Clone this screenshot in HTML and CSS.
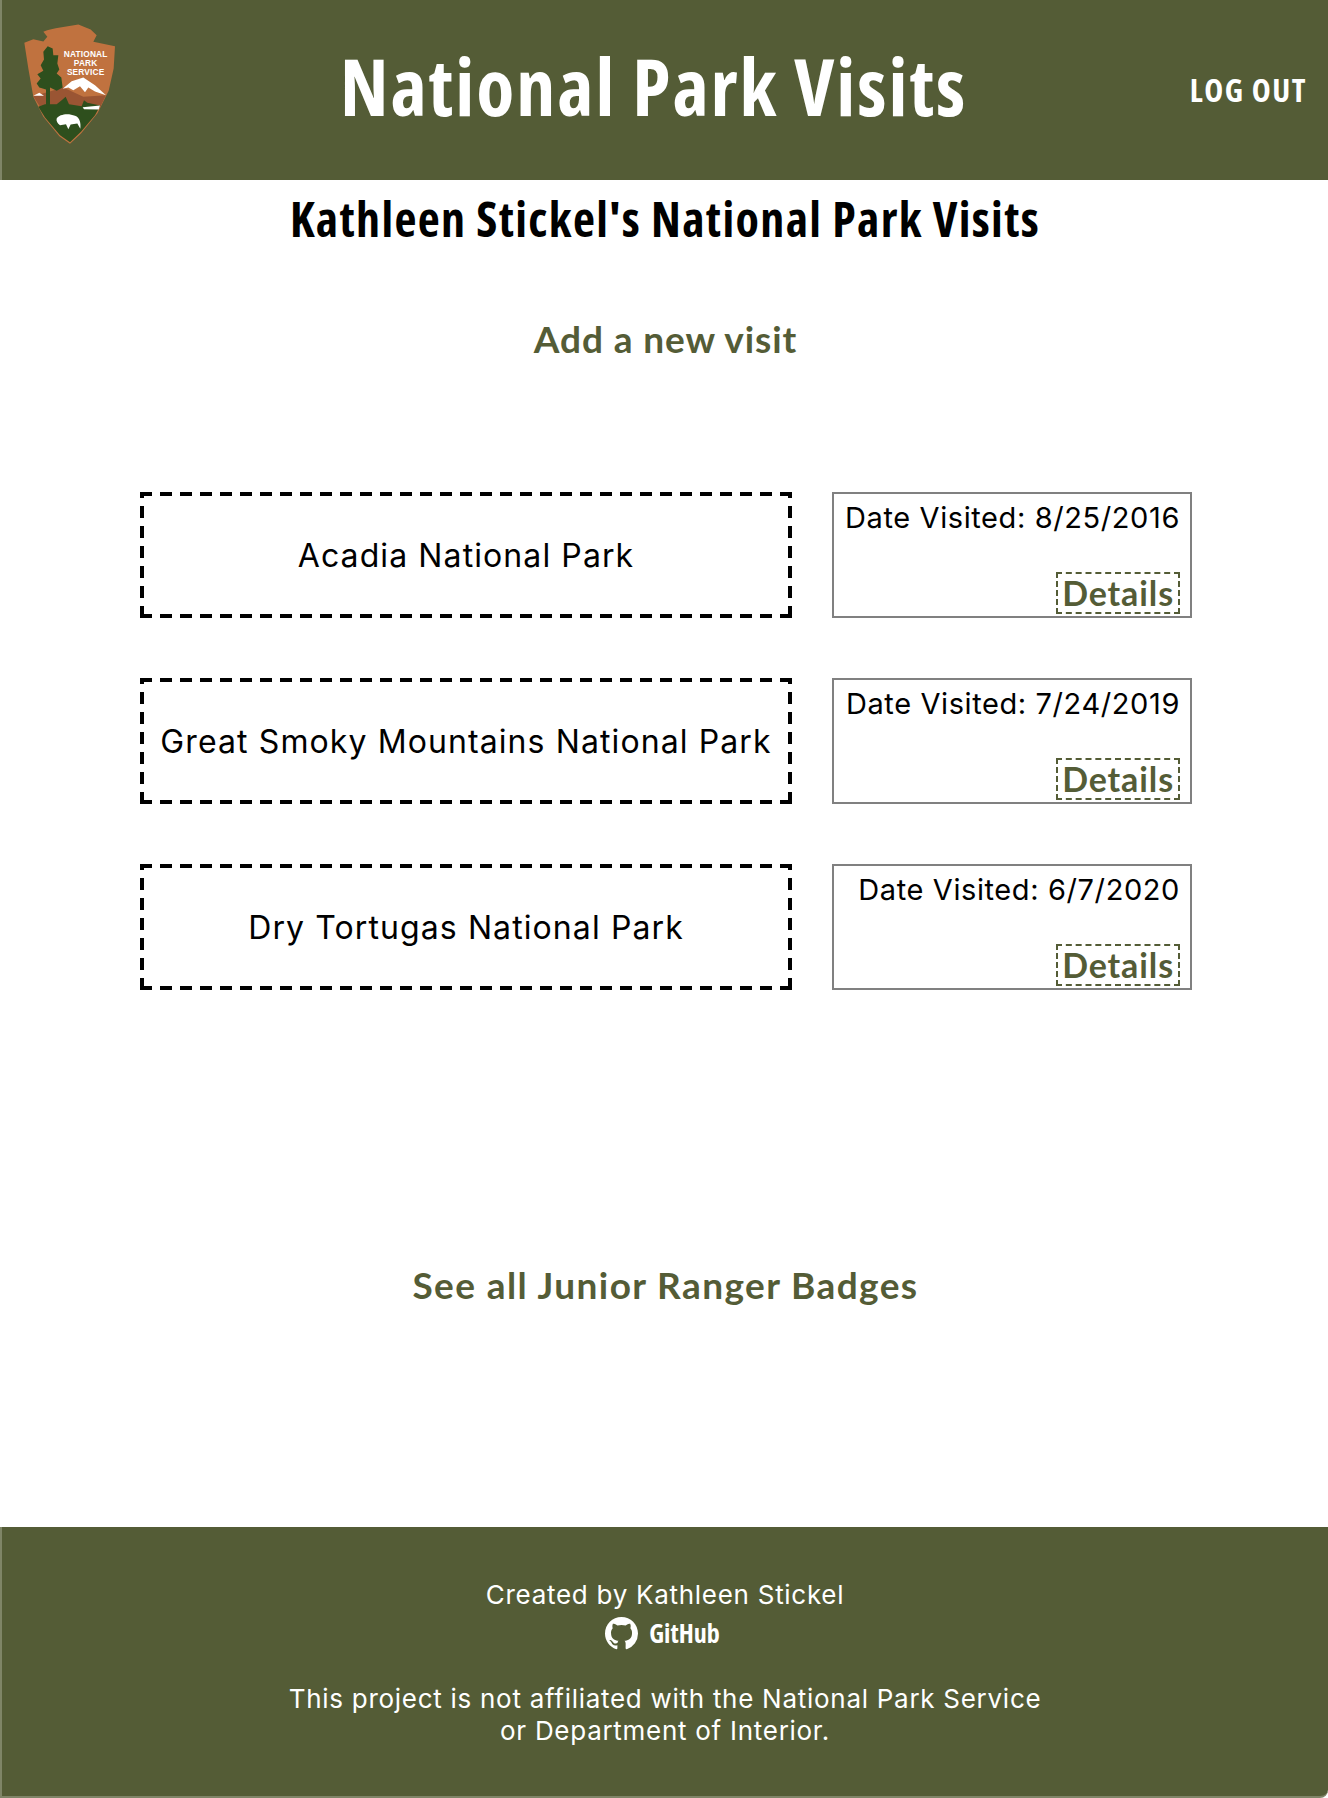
FILE: index.html
```html
<!DOCTYPE html>
<html lang="en">
<head>
<meta charset="utf-8">
<title>National Park Visits</title>
<link rel="stylesheet" href="styles.css">
</head>
<body>
<div class="page">
<header class="site-header">
  <svg class="logo" viewBox="60 60 300 380" role="img" aria-label="National Park Service">
    <path class="arrow-edge" d="M130 95C160 82 200 80 235 73L272 88L290 105L280 125L345 138L341 205L326 272L292 340L243 400L210 431L178 408L130 350L100 290L85 205L73 128L100 117L130 124L142 110Z"/>
    <path class="band" d="M100 288L190 262L250 290L318 285L300 322L240 325L120 320Z"/>
    <path class="land" d="M115 320L135 312L170 312L185 300L197 290L207 312L245 318L252 300L262 308L301 316L285 345L243 395L210 426L180 405L135 352Z"/>
    <path class="snow" d="M188 266L215 243L250 232L285 255L318 285L285 274L265 262L255 276L240 258L220 270L205 262Z"/>
    <path class="tree" d="M143 138L158 145L160 165L175 165L172 190L178 208L170 220L184 232L188 262L170 272L150 262L150 316H138V268L118 262L110 250L122 235L112 222L130 212L122 195L132 178L130 155Z"/>
    <path class="snow" d="M100 287L118 278L132 287ZM248 321L300 316L296 328L252 327Z"/>
    <path class="snow" d="M170 355C178 342 205 338 225 347C240 352 243 370 241 386L232 370L212 373L205 387L198 372L180 375C172 370 168 362 170 355Z"/>
    <text class="logo-text" x="257" y="170">NATIONAL</text>
    <text class="logo-text" x="257" y="197">PARK</text>
    <text class="logo-text" x="257" y="224">SERVICE</text>
  </svg>
  <h1 class="site-title">National Park Visits</h1>
  <a class="logout" href="#">LOG OUT</a>
</header>

<main class="content">
  <h2 class="user-title">Kathleen Stickel's National Park Visits</h2>
  <a class="action add-visit" href="#">Add a new visit</a>

  <section class="visits">
    <article class="visit">
      <a class="park" href="#">Acadia National Park</a>
      <div class="visit-info">
        <p class="visit-date">Date Visited: 8/25/2016</p>
        <a class="details" href="#">Details</a>
      </div>
    </article>
    <article class="visit">
      <a class="park" href="#">Great Smoky Mountains National Park</a>
      <div class="visit-info">
        <p class="visit-date">Date Visited: 7/24/2019</p>
        <a class="details" href="#">Details</a>
      </div>
    </article>
    <article class="visit">
      <a class="park" href="#">Dry Tortugas National Park</a>
      <div class="visit-info">
        <p class="visit-date">Date Visited: 6/7/2020</p>
        <a class="details" href="#">Details</a>
      </div>
    </article>
  </section>

  <a class="action badges" href="#">See all Junior Ranger Badges</a>
</main>

<footer class="site-footer">
  <p class="credit">Created by Kathleen Stickel</p>
  <a class="github" href="#">
    <svg class="github-mark" viewBox="0 0 16 16" aria-hidden="true"><path d="M8 0C3.58 0 0 3.58 0 8c0 3.54 2.29 6.53 5.47 7.59.4.07.55-.17.55-.38 0-.19-.01-.82-.01-1.49-2.01.37-2.53-.49-2.69-.94-.09-.23-.48-.94-.82-1.13-.28-.15-.68-.52-.01-.53.63-.01 1.08.58 1.23.82.72 1.21 1.87.87 2.33.66.07-.52.28-.87.51-1.07-1.78-.2-3.64-.89-3.64-3.95 0-.87.31-1.59.82-2.15-.08-.2-.36-1.02.08-2.12 0 0 .67-.21 2.2.82.64-.18 1.32-.27 2-.27s1.36.09 2 .27c1.53-1.04 2.2-.82 2.2-.82.44 1.1.16 1.92.08 2.12.51.56.82 1.27.82 2.15 0 3.07-1.87 3.75-3.65 3.95.29.25.54.73.54 1.48 0 1.07-.01 1.93-.01 2.2 0 .21.15.46.55.38A8.01 8.01 0 0 0 16 8c0-4.42-3.58-8-8-8z"/></svg>
    <span>GitHub</span>
  </a>
  <p class="disclaimer">This project is not affiliated with the National Park Service<br>or Department of Interior.</p>
</footer>
</div>
</body>
</html>
```
FILE: styles.css
```css
* { box-sizing: border-box; }
html, body { margin: 0; padding: 0; background: #fff; }
a { text-decoration: none; color: inherit; }
p, h1, h2 { margin: 0; }

.page {
  width: 1328px;
  height: 1798px;
  display: flex;
  flex-direction: column;
  font-family: "Inter", "Liberation Sans", sans-serif;
  color: #000;
}

.site-header {
  flex: 0 0 180px;
  display: flex;
  align-items: flex-start;
  background: #545c36;
  border-left: 2px solid #7f8567;
  color: #fff;
}
.logo { width: 100px; height: 127px; margin: 20px 0 0 18px; flex: none; }
.arrow-edge { fill: #c0723f; }
.band { fill: #9a5533; }
.land { fill: #2e4f1d; }
.tree { fill: #2e4f1d; }
.snow { fill: #fff; }
.logo-text {
  fill: #fff;
  font-family: "Liberation Sans", sans-serif;
  font-weight: 700;
  font-size: 25px;
  letter-spacing: 0.5px;
  text-anchor: middle;
}
.site-title {
  margin: 38px 0 0 220px;
  font-family: "Open Sans", "Liberation Sans", sans-serif;
  font-stretch: 75%;
  font-weight: 700;
  font-size: 78px;
  line-height: 96px;
  letter-spacing: 1.95px;
  white-space: nowrap;
}
.logout {
  margin: 70px 0 0 auto;
  padding-right: 21px;
  font-family: "Open Sans", "Liberation Sans", sans-serif;
  font-stretch: 75%;
  font-weight: 700;
  font-size: 32px;
  line-height: 40px;
  letter-spacing: 1.5px;
}

.content {
  flex: 1;
  display: flex;
  flex-direction: column;
  align-items: center;
}
.user-title {
  margin: 9px 0 0 2px;
  font-family: "Open Sans", "Liberation Sans", sans-serif;
  font-stretch: 75%;
  font-weight: 700;
  font-size: 48px;
  line-height: 60px;
  letter-spacing: 1.35px;
  white-space: nowrap;
}
.action {
  font-family: "Lato", sans-serif;
  font-weight: 700;
  font-size: 37px;
  line-height: 48px;
  color: #545c36;
}
.add-visit { margin: 66px 0 0 3px; letter-spacing: 0.9px; }
.badges { margin: 271px 0 0 3px; letter-spacing: 1.4px; }

.visits {
  margin-top: 129px;
  width: 1052px;
  margin-left: 4px;
  display: flex;
  flex-direction: column;
  gap: 60px;
}
.visit {
  display: flex;
  gap: 40px;
  height: 126px;
}
.park {
  flex: 1;
  display: flex;
  align-items: center;
  justify-content: center;
  background-image:
    repeating-linear-gradient(90deg, #000 0 12px, transparent 12px 20px),
    repeating-linear-gradient(90deg, #000 0 12px, transparent 12px 20px),
    repeating-linear-gradient(0deg, #000 0 12px, transparent 12px 20px),
    repeating-linear-gradient(0deg, #000 0 12px, transparent 12px 20px);
  background-size: 100% 4px, 100% 4px, 4px 100%, 4px 100%;
  background-position: 0 0, 0 100%, 0 0, 100% 0;
  background-repeat: no-repeat;
  font-size: 32px;
  letter-spacing: 1.1px;
  white-space: nowrap;
}
.visit-info {
  flex: 0 0 360px;
  border: 2px solid #808080;
  padding: 4px 10px 2px;
  display: flex;
  flex-direction: column;
  align-items: flex-end;
  justify-content: space-between;
}
.visit-date { font-size: 29px; line-height: 40px; letter-spacing: 0.6px; white-space: nowrap; }
.details {
  font-family: "Lato", sans-serif;
  font-weight: 700;
  font-size: 34px;
  line-height: 38px;
  padding: 0 4px;
  border: 2px dashed #545c36;
  color: #545c36;
  letter-spacing: 0.9px;
}

.site-footer {
  flex: 0 0 271px;
  background: #545c36;
  border-left: 2px solid #7f8567;
  border-bottom: 2px solid #7f8567;
  border-bottom-right-radius: 8px;
  color: #fff;
  display: flex;
  flex-direction: column;
  align-items: center;
  padding-top: 52px;
  font-size: 26px;
  line-height: 32px;
  letter-spacing: 0.72px;
}
.github {
  display: flex;
  align-items: center;
  gap: 11px;
  height: 40px;
  margin: 2px 5px 0 0;
  font-family: "Open Sans", "Liberation Sans", sans-serif;
  font-stretch: 75%;
  font-weight: 700;
  letter-spacing: 0;
}
.github-mark { width: 33px; height: 33px; fill: #fff; }
.disclaimer { margin-top: 30px; text-align: center; }
```
